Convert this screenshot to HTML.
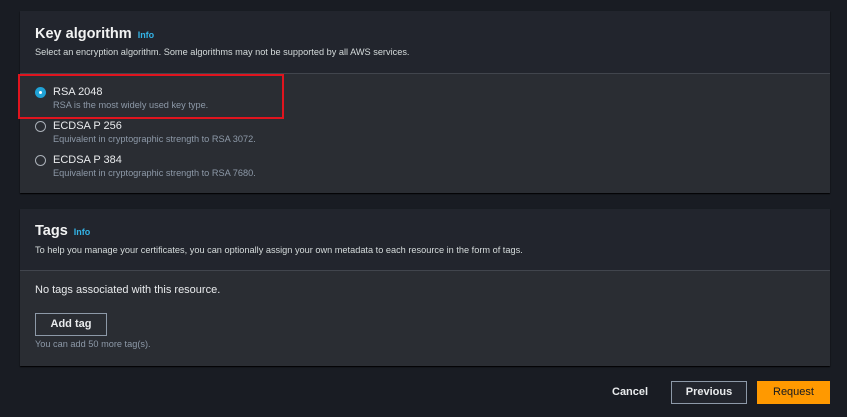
<!DOCTYPE html>
<html><head><style>
*{margin:0;padding:0;box-sizing:border-box}
body{width:847px;height:417px;background:#191c23;font-family:"Liberation Sans",sans-serif;position:relative;overflow:hidden;color:#d5dbdb}
.p{position:absolute;left:20px;width:810px;background:#2a2d33;box-shadow:0 1px 1px #000}
.h{background:#22252d;border-bottom:1px solid #41454d}
.t{position:absolute;font-size:14.5px;font-weight:bold;color:#f2f3f3}
.i{font-size:9px;color:#33b3e6;font-weight:bold;margin-left:6px}
.s{position:absolute;font-size:9.2px;color:#d5dbdb}
.r{position:absolute;left:35px;width:11px;height:11px;border-radius:50%;border:1.5px solid #aab0b8}
.on{border:none;background:#20a2d6}
.on:after{content:"";position:absolute;left:4px;top:4px;width:3px;height:3px;border-radius:50%;background:#fff}
.l{position:absolute;left:53px;font-size:11px;color:#e9ebed}
.d{position:absolute;left:53px;font-size:9.2px;color:#8d99a8}
</style></head><body>
<div class="p" style="top:11px;height:182px"><div class="h" style="height:63px"></div></div>
<div class="t" style="left:35px;top:26px">Key algorithm<span class="i">Info</span></div>
<div class="s" style="left:35px;top:47px">Select an encryption algorithm. Some algorithms may not be supported by all AWS services.</div>
<div style="position:absolute;left:18px;top:74px;width:266px;height:45px;border:2.5px solid #e0141e"></div>
<div class="r on" style="top:87px"></div><div class="l" style="top:86px">RSA 2048</div><div class="d" style="top:100px">RSA is the most widely used key type.</div>
<div class="r" style="top:121px"></div><div class="l" style="top:120px">ECDSA P 256</div><div class="d" style="top:134px">Equivalent in cryptographic strength to RSA 3072.</div>
<div class="r" style="top:155px"></div><div class="l" style="top:154px">ECDSA P 384</div><div class="d" style="top:168px">Equivalent in cryptographic strength to RSA 7680.</div>

<div class="p" style="top:209px;height:157px"><div class="h" style="height:62px"></div></div>
<div class="t" style="left:35px;top:223px">Tags<span class="i">Info</span></div>
<div class="s" style="left:35px;top:245px">To help you manage your certificates, you can optionally assign your own metadata to each resource in the form of tags.</div>
<div style="position:absolute;left:35px;top:284px;font-size:11px;color:#e9ebed">No tags associated with this resource.</div>
<div style="position:absolute;left:35px;top:313px;width:72px;height:23px;border:1px solid #8d99a8;font-size:11px;font-weight:bold;color:#e9ebed;text-align:center;line-height:21px">Add tag</div>
<div class="d" style="left:35px;top:339px">You can add 50 more tag(s).</div>

<div style="position:absolute;left:612px;top:386px;font-size:11px;font-weight:bold;color:#e9ebed">Cancel</div>
<div style="position:absolute;left:671px;top:381px;width:76px;height:23px;border:1px solid #8d99a8;background:#22252d;font-size:11px;font-weight:bold;color:#e9ebed;text-align:center;line-height:21px">Previous</div>
<div style="position:absolute;left:757px;top:381px;width:73px;height:23px;background:#ff9900;font-size:11px;color:#16191f;text-align:center;line-height:23px">Request</div>
</body></html>
